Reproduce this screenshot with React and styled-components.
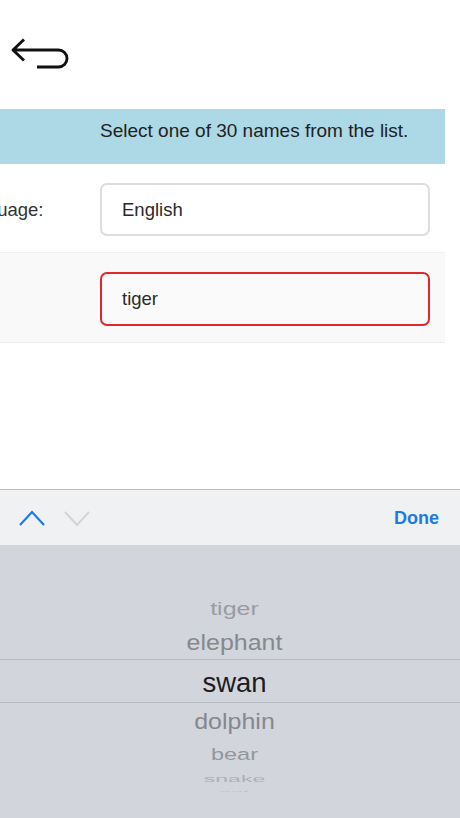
import React from "react";
import styled, { createGlobalStyle } from "styled-components";

const Global = createGlobalStyle`
  html, body { margin: 0; padding: 0; background: #ffffff; }
  body { font-family: "Liberation Sans", Arial, Helvetica, sans-serif; overflow: hidden; }
  * { box-sizing: border-box; }
`;

const Page = styled.div`
  width: 460px;
  height: 818px;
  display: flex;
  flex-direction: column;
  overflow: hidden;
  background: #ffffff;
`;

const Header = styled.div`
  height: 109px;
  padding: 36px 0 0 10px;
`;

const BackButton = styled.button`
  display: block;
  border: 0;
  padding: 0;
  background: none;
  width: 60px;
  height: 36px;
  cursor: pointer;
`;

const Form = styled.div`
  margin-left: -60px;
  width: 505px;
  display: flex;
  flex-direction: column;
`;

const Banner = styled.div`
  height: 55px;
  padding: 11px 0 0 160px;
  background: #add8e6;
  color: #222;
  font-size: 19px;
  line-height: 22px;
  white-space: nowrap;
`;

const Row = styled.div`
  display: grid;
  grid-template-columns: 160px 1fr;
  align-items: center;
  padding: 19px 15px 16px 0;
  background: ${(p) => (p.$alt ? "#f9f9f9" : "#ffffff")};
  border-top: ${(p) => (p.$alt ? "1px solid #f1f1f1" : "0")};
  border-bottom: ${(p) => (p.$alt ? "1px solid #ececec" : "0")};
`;

const Label = styled.div`
  padding-left: 16px;
  font-size: 18.5px;
  color: #333;
  white-space: nowrap;
`;

const Field = styled.div`
  height: ${(p) => (p.$invalid ? "54px" : "53px")};
  display: flex;
  align-items: center;
  padding-left: 20px;
  border: 2px solid ${(p) => (p.$invalid ? "#e2262d" : "#dddddd")};
  border-radius: 7px;
  background: ${(p) => (p.$invalid ? "#fafafa" : "#ffffff")};
  font-size: 18.5px;
  color: #2a2a2a;
`;

const Spacer = styled.div`
  flex: 1;
`;

const Toolbar = styled.div`
  height: 56px;
  border-top: 1px solid #bcbcbc;
  background: #f0f1f3;
  display: flex;
  align-items: center;
  padding: 1px 21px 0 18px;
`;

const Arrows = styled.div`
  display: flex;
  gap: 17px;
  align-items: center;
`;

const Chevron = styled.svg`
  display: block;
  width: 28px;
  height: 17px;
`;

const Done = styled.button`
  margin-left: auto;
  border: 0;
  padding: 0;
  background: none;
  font-family: "Liberation Sans", Arial, Helvetica, sans-serif;
  font-weight: 700;
  font-size: 18px;
  color: #1b7ae6;
`;

const Picker = styled.div`
  height: 273px;
  background: #d2d5dc;
  padding-top: 49px;
  display: flex;
  flex-direction: column;
  overflow: hidden;
`;

const Item = styled.div`
  height: ${(p) => p.$h}px;
  display: flex;
  align-items: center;
  justify-content: center;
  padding-left: 9px;
  border-top: ${(p) => (p.$selected ? "1px solid #b7bbc3" : "0")};
  border-bottom: ${(p) => (p.$selected ? "1px solid #b7bbc3" : "0")};
`;

const ItemText = styled.span`
  display: block;
  margin-top: ${(p) => p.$shift}px;
  font-size: ${(p) => p.$size}px;
  line-height: 1;
  color: ${(p) => p.$color};
  transform: scaleY(${(p) => p.$scale});
  white-space: nowrap;
`;

const items = [
  { name: "tiger", h: 30, size: 25, scale: 0.72, color: "#9a9ca1", shift: -1 },
  { name: "elephant", h: 35, size: 25, scale: 0.9, color: "#86888d", shift: 1 },
  { name: "swan", h: 44, size: 27.5, scale: 1, color: "#1d1d1f", shift: 3, selected: true },
  { name: "dolphin", h: 36, size: 25, scale: 0.88, color: "#86888d", shift: 0 },
  { name: "bear", h: 31, size: 23.5, scale: 0.74, color: "#94969b", shift: 1 },
  { name: "snake", h: 17, size: 23, scale: 0.42, color: "#aeb0b5", shift: 0 },
  { name: "cat", h: 8, size: 22, scale: 0.1, color: "#bfc1c6", shift: 0 },
];

export default function App() {
  return (
    <>
      <Global />
      <Page>
        <Header>
          <BackButton aria-label="Back">
            <svg width="60" height="36" viewBox="0 0 60 36" fill="none">
              <path
                d="M14 3.5 L3 14 L14 24.5 M3 14 H48.5 A8.5 8.5 0 0 1 48.5 31 H27"
                stroke="#111"
                strokeWidth="2.9"
                strokeLinejoin="round"
              />
            </svg>
          </BackButton>
        </Header>
        <Form>
          <Banner>Select one of 30 names from the list.</Banner>
          <Row>
            <Label>Language:</Label>
            <Field>English</Field>
          </Row>
          <Row $alt>
            <Label />
            <Field $invalid>tiger</Field>
          </Row>
        </Form>
        <Spacer />
        <Toolbar>
          <Arrows>
            <Chevron viewBox="0 0 28 17" fill="none">
              <path d="M2 15 L14 2 L26 15" stroke="#1b7ae6" strokeWidth="2.2" />
            </Chevron>
            <Chevron viewBox="0 0 28 17" fill="none">
              <path d="M2 2 L14 15 L26 2" stroke="#d3d4d7" strokeWidth="2" />
            </Chevron>
          </Arrows>
          <Done>Done</Done>
        </Toolbar>
        <Picker>
          {items.map((it) => (
            <Item key={it.name} $h={it.h} $selected={it.selected}>
              <ItemText $size={it.size} $scale={it.scale} $color={it.color} $shift={it.shift}>
                {it.name}
              </ItemText>
            </Item>
          ))}
        </Picker>
      </Page>
    </>
  );
}
